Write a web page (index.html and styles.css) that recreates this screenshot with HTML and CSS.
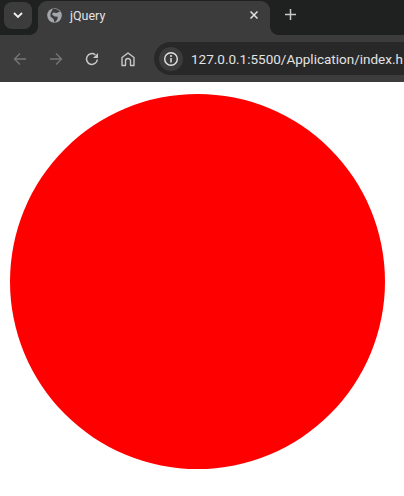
FILE: index.html
```html
<!DOCTYPE html>
<html lang="en">
    <head>
        <meta charset="UTF-8" />
        <meta name="viewport" content="width=device-width, initial-scale=1.0" />
        <title>jQuery</title>
        <link rel="stylesheet" href="styles.css">
    </head>
    <body>
        <div class="tabstrip">
            <div class="tab-search">
                <svg width="10" height="7" viewBox="0 0 10 7"><path d="M1 1l4 4 4-4" fill="none" stroke="#f0f0f0" stroke-width="1.800"/></svg>
            </div>
            <div class="tab">
                <svg class="favicon" width="15" height="15" viewBox="0 0 15 15">
                    <circle cx="7.500" cy="7.500" r="7.300" fill="#a3a7ad"/>
                    <path d="M6 .5 10.500 1.500 13 3.500 9.500 5 6 4.500 5 6.500 7.500 8.500 11 8.800 10 12 7.500 14.500 6.500 11 3.500 8.500 3.500 5.500Z" fill="#3c3c3c"/>
                </svg>
                <span class="tab-title">jQuery</span>
                <svg class="tab-close" width="8" height="8" viewBox="0 0 8 8"><path d="M.5.5l7 7M7.500.5l-7 7" stroke="#e3e3e3" stroke-width="1.500"/></svg>
            </div>
            <svg class="new-tab" width="11" height="11" viewBox="0 0 11 11"><path d="M5.500 0v11M0 5.500h11" stroke="#c8c8c8" stroke-width="1.500"/></svg>
        </div>
        <div class="toolbar">
            <div class="nav">
                <svg width="16" height="16" viewBox="0 0 16 16"><path d="M14 8H2.500M8 2.500 2.500 8 8 13.500" fill="none" stroke="#757575" stroke-width="1.400"/></svg>
                <svg width="16" height="16" viewBox="0 0 16 16"><path d="M2 8h11.500M8 2.500 13.500 8 8 13.500" fill="none" stroke="#757575" stroke-width="1.400"/></svg>
                <svg width="16" height="16" viewBox="0 0 16 16">
                    <path d="M13.300 8.500A5.400 5.400 0 1 1 11.300 3.800" fill="none" stroke="#c8c8c8" stroke-width="1.500"/>
                    <path d="M14 2v5H9Z" fill="#c8c8c8"/>
                </svg>
                <svg width="16" height="16" viewBox="0 0 16 16"><path d="M2 14.500V6.500L8 2l6 4.500v8H10.500V10A2.500 2.500 0 0 0 5.500 10V14.500Z" fill="none" stroke="#c8c8c8" stroke-width="1.400" stroke-linejoin="round"/></svg>
            </div>
            <div class="omnibox">
                <div class="site-info">
                    <svg width="16" height="16" viewBox="0 0 16 16">
                        <circle cx="8" cy="8" r="6.300" fill="none" stroke="#e3e3e3" stroke-width="1.400"/>
                        <path d="M8 7v4.500" stroke="#e3e3e3" stroke-width="1.500"/>
                        <circle cx="8" cy="5" r="1" fill="#e3e3e3"/>
                    </svg>
                </div>
                <span class="url">127.0.0.1:5500/Application/index.h</span>
            </div>
        </div>
        <div class="page">
            <div class="ball"></div>
        </div>
    </body>
</html>
```

FILE: styles.css
```css
* {
    margin: 0;
    padding: 0;
    box-sizing: border-box;
    font-family: Roboto, "Liberation Sans", sans-serif;
}

body {
    width: 404px;
    height: 496px;
    overflow: hidden;
    background: #fff;
}

.tabstrip {
    height: 35px;
    background: #1f2020;
    display: flex;
    align-items: flex-end;
    padding-left: 4px;
}

.tab-search {
    width: 28px;
    height: 27px;
    margin-bottom: 6px;
    background: #3c3c3c;
    border-radius: 8px;
    display: flex;
    align-items: center;
    justify-content: center;
}

.tab {
    position: relative;
    width: 232px;
    height: 34px;
    margin-left: 6px;
    padding: 0 12px 6px 9px;
    background: #3c3c3c;
    border-radius: 9px 9px 0 0;
    display: flex;
    align-items: center;
    gap: 8px;
}

.tab::before,
.tab::after {
    content: "";
    position: absolute;
    bottom: 0;
    width: 8px;
    height: 8px;
}

.tab::before {
    left: -8px;
    background: radial-gradient(circle at 0 0, transparent 7.500px, #3c3c3c 8px);
}

.tab::after {
    right: -8px;
    background: radial-gradient(circle at 100% 0, transparent 7.500px, #3c3c3c 8px);
}

.tab-title {
    flex: 1;
    margin-top: 1px;
    color: #e3e3e3;
    font-size: 12.500px;
}

.tab-close {
    margin-top: -1px;
}

.new-tab {
    margin: 0 0 15px 15px;
}

.toolbar {
    height: 47px;
    background: #3c3c3c;
    display: flex;
    align-items: center;
    padding-left: 12px;
    gap: 18px;
}

.nav {
    display: flex;
    gap: 20px;
}

.omnibox {
    flex: 1;
    height: 33px;
    padding-left: 5px;
    background: #282828;
    border-radius: 17px 0 0 17px;
    display: flex;
    align-items: center;
    gap: 8px;
}

.site-info {
    width: 24px;
    height: 24px;
    background: #3c3c3c;
    border-radius: 50%;
    display: flex;
    align-items: center;
    justify-content: center;
}

.url {
    color: #e3e3e3;
    font-size: 13.500px;
    white-space: nowrap;
}

.page {
    padding: 12px 0 0 10px;
}

.ball {
    width: 375px;
    height: 375px;
    background: #f00;
    border-radius: 50%;
}
```
